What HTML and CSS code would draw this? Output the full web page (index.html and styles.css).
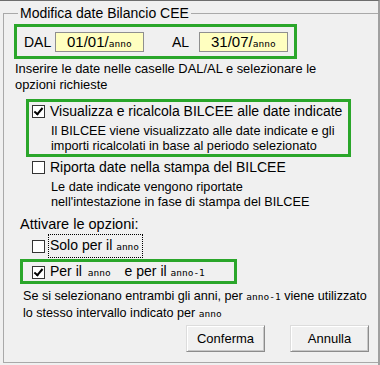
FILE: index.html
```html
<!DOCTYPE html>
<html lang="it">
<head>
    <meta charset="UTF-8">
    <title>Modifica date Bilancio CEE</title>
    <link rel="stylesheet" href="styles.css">
</head>
<body>
    <div class="window">
        <fieldset class="group">
            <legend>Modifica date Bilancio CEE</legend>

            <!-- Date range -->
            <div class="hl dates">
                <span class="lbl">DAL</span>
                <div class="datebox">01/01/<span class="mono">anno</span></div>
                <span class="lbl al">AL</span>
                <div class="datebox">31/07/<span class="mono">anno</span></div>
            </div>

            <p class="note">Inserire le date nelle caselle DAL/AL e selezionare le<br>opzioni richieste</p>

            <!-- Options -->
            <div class="hl opt-box">
                <label class="check big"><span class="box on"></span><span>Visualizza e ricalcola BILCEE alle date indicate</span></label>
                <p class="desc">Il BILCEE viene visualizzato alle date indicate e gli<br>importi ricalcolati in base al periodo selezionato</p>
            </div>

            <div class="opt-plain">
                <label class="check big"><span class="box"></span><span>Riporta date nella stampa del BILCEE</span></label>
                <p class="desc">Le date indicate vengono riportate<br>nell'intestazione in fase di stampa del BILCEE</p>
            </div>

            <p class="attiva">Attivare le opzioni:</p>

            <label class="check big solo"><span class="box"></span><span class="focus">Solo per il <span class="mono">anno</span></span></label>

            <div class="hl years">
                <label class="check big"><span class="box on"></span><span>Per il <span class="mono gap">anno</span> e per il <span class="mono">anno-1</span></span></label>
            </div>

            <p class="hint">Se si selezionano entrambi gli anni, per <span class="mono">anno-1</span> viene utilizzato<br>lo stesso intervallo indicato per <span class="mono">anno</span></p>

            <div class="buttons">
                <button class="btn">Conferma</button>
                <button class="btn">Annulla</button>
            </div>
        </fieldset>
    </div>
</body>
</html>
```

FILE: styles.css
```css
body {
    margin: 0;
    background-color: #f0f0f0;
    font-family: "Liberation Sans", Arial, sans-serif;
    color: #000;
}

p {
    margin: 0;
    white-space: nowrap;
}

.window {
    width: 380px;
    height: 365px;
    box-sizing: border-box;
    border-top: 1px solid #6d6d6d;
    border-right: 2px solid #a0a0a0;
    padding: 4px 0 2px 3px;
}

.group {
    margin: 0;
    height: 358px;
    box-sizing: border-box;
    border: 1px solid #a9a9a9;
    border-right: none;
    padding: 0 0 0 10px;
    min-width: 0;
}

legend {
    font-size: 14px;
    padding: 0 2px;
    margin-left: 4px;
}

.hl {
    border: 3px solid #2aa62a;
}

.dates {
    display: flex;
    align-items: center;
    width: 277px;
    height: 29px;
    margin-top: 3px;
    font-size: 14px;
}

.lbl {
    margin-left: 7px;
    width: 31px;
}

.lbl.al {
    margin-left: 28px;
    width: 27px;
}

.datebox {
    width: 76px;
    height: 18px;
    border: 1px solid #8f8f8f;
    background-color: #ffffc0;
    font-size: 15px;
    line-height: 18px;
    padding-left: 11px;
}

.mono {
    font-family: "DejaVu Sans Mono", monospace;
    font-size: 9.5px;
}

.note {
    margin: 2px 0 0 1px;
    font-size: 12.9px;
    line-height: 16px;
}

.opt-box {
    width: 316px;
    height: 52px;
    margin: 6px 0 0 12px;
    padding-left: 3px;
}

.check {
    display: flex;
    align-items: center;
    white-space: nowrap;
}

.big {
    font-size: 14px;
    line-height: 18px;
}

.box {
    width: 11px;
    height: 11px;
    border: 1px solid #333;
    background-color: #fff;
    margin-right: 5px;
    flex: none;
    position: relative;
}

.box.on::after {
    content: "";
    position: absolute;
    left: 3px;
    top: 0;
    width: 3px;
    height: 7px;
    border: solid #000;
    border-width: 0 2px 2px 0;
    transform: rotate(40deg);
}

.desc {
    margin: 4px 0 0 19px;
    font-size: 12.7px;
    line-height: 15px;
}

.opt-plain {
    margin: 1px 0 0 18px;
}

.opt-plain .desc {
    margin-top: 4px;
}

.attiva {
    margin: 6px 0 0 6px;
    font-size: 14.5px;
    line-height: 16px;
}

.solo {
    margin: 4px 0 0 18px;
}

.focus {
    outline: 1px dotted #000;
    outline-offset: 1px;
    padding: 0 2px 0 0;
}

.years {
    width: 202px;
    height: 19px;
    margin: 3px 0 0 6px;
    padding-left: 9px;
}

.gap {
    margin: 0 10px 0 2px;
}

.hint {
    margin: 4px 0 0 9px;
    font-size: 12.6px;
    line-height: 16px;
}

.buttons {
    display: flex;
    justify-content: flex-end;
    gap: 25px;
    margin: 3px 9px 0 0;
}

.btn {
    font-family: inherit;
    font-size: 13px;
    width: 79px;
    height: 27px;
    background-color: #f0f0f0;
    border: 1px solid;
    border-color: #dcdcdc #8c8c8c #8c8c8c #dcdcdc;
    box-shadow: inset 1px 1px 0 #fff, inset -1px -1px 0 #c8c8c8;
}
```
